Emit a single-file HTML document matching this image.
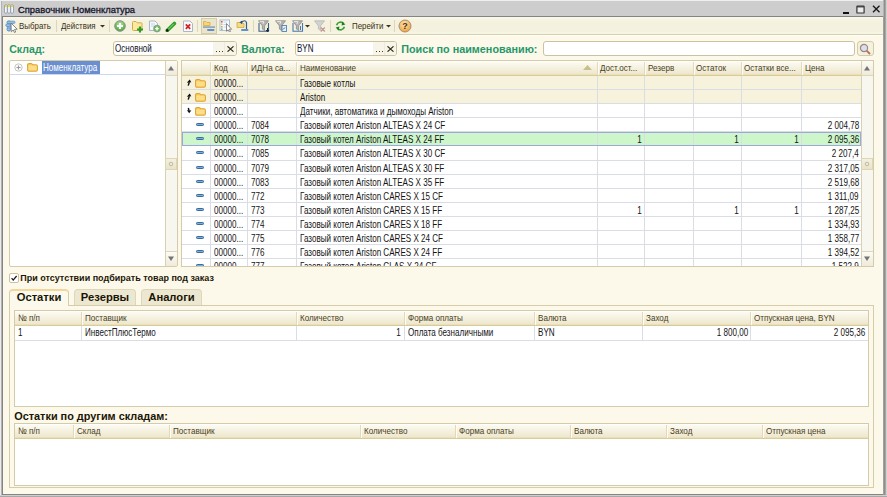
<!DOCTYPE html>
<html><head><meta charset="utf-8"><style>
html,body{margin:0;padding:0;width:887px;height:497px;overflow:hidden;background:#cdcdcd;position:relative;font-family:"Liberation Sans", sans-serif}
div{position:absolute}
.t{position:absolute;white-space:nowrap;line-height:1;font-family:"Liberation Sans", sans-serif}
</style></head><body>
<div style="left:0px;top:0px;width:887px;height:1px;background:#efefef"></div><div style="left:0px;top:1px;width:887px;height:15px;background:#cdcdcd"></div><div style="left:0px;top:0px;width:1px;height:497px;background:#ececec"></div><div style="left:1px;top:1px;width:1px;height:496px;background:#b2b2b2"></div><div style="left:2px;top:16px;width:882px;height:479px;background:#848484"></div><div style="left:3px;top:17px;width:880px;height:477px;background:#fcf9ea"></div><div style="left:883px;top:0px;width:1px;height:497px;background:#b4b4b4"></div><div style="left:884px;top:0px;width:1px;height:497px;background:#8e8e8e"></div><div style="left:885px;top:0px;width:1px;height:497px;background:#a6a6a6"></div><div style="left:886px;top:0px;width:1px;height:497px;background:#d2d2cc"></div><div style="left:883px;top:16px;width:1px;height:479px;background:#a0a0a0"></div><div style="left:0px;top:495px;width:887px;height:1px;background:#cfcfcf"></div><div style="left:0px;top:496px;width:887px;height:1px;background:#a8a8a8"></div><svg style="position:absolute;left:4px;top:4px" width="10" height="10" viewBox="0 0 10 10"><g fill="#fff" stroke="#8797ab" stroke-width="0.9"><rect x="0.6" y="0.8" width="2.6" height="8.4" rx="1"/><rect x="3.7" y="0.8" width="2.6" height="8.4" rx="1"/><rect x="6.8" y="0.8" width="2.6" height="8.4" rx="1"/></g><g fill="#f3d21e"><rect x="1" y="1.2" width="1.8" height="1.8"/><rect x="4.1" y="1.2" width="1.8" height="1.8"/><rect x="7.2" y="1.2" width="1.8" height="1.8"/></g></svg><span class="t" style="left:18px;top:4.74px;font-size:9.4px;font-weight:400;color:#15152a;-webkit-text-stroke:0.3px #15152a">Справочник Номенклатура</span><div style="left:843px;top:12px;width:6px;height:2px;background:#111"></div><svg style="position:absolute;left:856px;top:5px" width="9" height="9" viewBox="0 0 9 9"><rect x="0.9" y="1" width="7.2" height="7" rx="0.6" fill="#ececec" stroke="#333" stroke-width="1.2"/><line x1="1" y1="1.8" x2="8" y2="1.8" stroke="#333" stroke-width="1.2"/></svg><svg style="position:absolute;left:872px;top:5px" width="9" height="8" viewBox="0 0 9 8"><path d="M1 0.8 L7.5 7.3 M7.5 0.8 L1 7.3" stroke="#1a1a1a" stroke-width="1.35"/></svg><div style="left:3px;top:17px;width:880px;height:17px;background:linear-gradient(#fbf9ea 0px,#f6f3e2 3px,#f4f1de 5px,#f4f1de 14px,#f8f6e6 17px)"></div><div style="left:3px;top:34px;width:880px;height:1px;background:#d6cfae"></div><div style="left:3px;top:35px;width:880px;height:1px;background:#fffff6"></div><span class="t" style="left:19.2px;top:21.52px;font-size:8.6px;font-weight:400;color:#3a3016;transform:scaleX(0.92);transform-origin:0 0;">Выбрать</span><div style="left:56px;top:20px;width:1px;height:12px;background:#dcd6ba"></div><span class="t" style="left:61.4px;top:21.52px;font-size:8.6px;font-weight:400;color:#3a3016;transform:scaleX(0.92);transform-origin:0 0;">Действия</span><svg style="position:absolute;left:100px;top:25px" width="5" height="3" viewBox="0 0 5 3"><path d="M0 0 L5 0 L2.5 2.6 Z" fill="#3a3220"/></svg><div style="left:109px;top:20px;width:1px;height:12px;background:#dcd6ba"></div><span class="t" style="left:351.7px;top:21.52px;font-size:8.6px;font-weight:400;color:#3a3016;transform:scaleX(0.92);transform-origin:0 0;">Перейти</span><svg style="position:absolute;left:386px;top:25px" width="5" height="3" viewBox="0 0 5 3"><path d="M0 0 L5 0 L2.5 2.6 Z" fill="#3a3220"/></svg><div style="left:197px;top:20px;width:1px;height:12px;background:#dcd6ba"></div><div style="left:253px;top:20px;width:1px;height:12px;background:#dcd6ba"></div><div style="left:330px;top:20px;width:1px;height:12px;background:#dcd6ba"></div><div style="left:394px;top:20px;width:1px;height:12px;background:#dcd6ba"></div><svg style="position:absolute;left:5px;top:20px" width="13" height="13" viewBox="0 0 13 13"><g fill="#9cc4ec" stroke="#5d8fc6" stroke-width="0.8"><rect x="2.4" y="1" width="3" height="10" rx="1.2"/><rect x="2" y="1.2" width="8" height="2.2" rx="1.1"/><rect x="0.8" y="4" width="4.6" height="2.4" rx="1.2"/><rect x="2" y="8" width="3.4" height="2.6" rx="1.2"/></g><path d="M6 3 L6.3 11.8 L8.2 10 L9.5 12.6 L10.7 12 L9.5 9.4 L12.2 9.2 Z" fill="#fff" stroke="#7a7a7a" stroke-width="0.9" stroke-linejoin="round"/></svg><svg style="position:absolute;left:114px;top:20px" width="12" height="12" viewBox="0 0 12 12"><defs><radialGradient id="gc" cx="0.5" cy="0.35" r="0.6"><stop offset="0" stop-color="#b8e8a8"/><stop offset="1" stop-color="#4fa83e"/></radialGradient></defs><circle cx="6" cy="6" r="5.3" fill="url(#gc)" stroke="#8a948a" stroke-width="1"/><path d="M6 3 V9 M3 6 H9" stroke="#fff" stroke-width="2"/></svg><svg style="position:absolute;left:131px;top:20px" width="13" height="13" viewBox="0 0 13 13"><path d="M1.5 2.5 Q1.5 1.5 2.5 1.5 H5 L6.2 2.8 H10 Q11 2.8 11 3.8 V9.5 Q11 10.5 10 10.5 H2.5 Q1.5 10.5 1.5 9.5 Z" fill="#f9eaa0" stroke="#d6a94a" stroke-width="1"/><path d="M9 6.5 V12.5 M6 9.5 H12" stroke="#2e9a2a" stroke-width="2.2"/></svg><svg style="position:absolute;left:148px;top:20px" width="13" height="13" viewBox="0 0 13 13"><path d="M1.5 1 H7 L9.5 3.5 V10.5 H1.5 Z" fill="#f4f7fb" stroke="#a8b8cc" stroke-width="1"/><path d="M3 4 H7 M3 6 H6" stroke="#c9d4e2" stroke-width="1"/><circle cx="9" cy="8.6" r="3.4" fill="#6bbb5a" stroke="#8a948a" stroke-width="0.8"/><path d="M9 6.8 V10.4 M7.2 8.6 H10.8" stroke="#fff" stroke-width="1.4"/></svg><svg style="position:absolute;left:165px;top:21px" width="12" height="11" viewBox="0 0 12 11"><path d="M2.2 9.6 L9.4 2.4" stroke="#2f9f2a" stroke-width="3.6" stroke-linecap="round"/><path d="M2.6 9 L8.8 2.8" stroke="#8fe07a" stroke-width="1"/><circle cx="2.3" cy="9.4" r="1.3" fill="#1b1b1b"/></svg><svg style="position:absolute;left:182px;top:20px" width="12" height="13" viewBox="0 0 12 13"><path d="M1.5 1 H8 L10.5 3.5 V11.5 H1.5 Z" fill="#f7f9fc" stroke="#a8b8cc" stroke-width="1"/><path d="M3.8 4.4 L8.2 8.8 M8.2 4.4 L3.8 8.8" stroke="#d42020" stroke-width="1.7"/></svg><div style="left:201px;top:18px;width:14px;height:14px;background:#ebe5cb;border:1px solid #d5cca8"></div><svg style="position:absolute;left:202px;top:20px" width="14" height="12" viewBox="0 0 14 12"><path d="M1.5 1.5 H4 L5 2.5 H8 V5.5 H1.5 Z" fill="#f4d878" stroke="#d8aa48" stroke-width="0.8"/><rect x="1" y="6.3" width="12" height="1.6" fill="#8fa3b8"/><rect x="5" y="9" width="7.5" height="2" rx="1" fill="#5f90c8"/></svg><svg style="position:absolute;left:219px;top:19px" width="14" height="13" viewBox="0 0 14 13"><rect x="1" y="1" width="9.5" height="10.5" fill="#f7fafd" stroke="#a9c0d8" stroke-width="1"/><rect x="2" y="2" width="1.6" height="1.6" fill="#e05050"/><rect x="2" y="4.5" width="1.6" height="1.6" fill="#e8c050"/><rect x="2" y="7" width="1.6" height="1.6" fill="#d8a070"/><rect x="2" y="9.5" width="1.6" height="1.2" fill="#50a050"/><path d="M4.5 3 H8 M4.5 5.5 H8 M4.5 8 H7" stroke="#c8d6e6" stroke-width="1"/><path d="M7.5 4.5 L7.5 12.3 L9.2 10.8 L10.4 13 L11.5 12.4 L10.4 10.2 L12.6 10.2 Z" fill="#fff" stroke="#7d7d7d" stroke-width="0.9"/></svg><svg style="position:absolute;left:236px;top:19px" width="13" height="13" viewBox="0 0 13 13"><path d="M1 3.5 H4 L5 4.5 H8 V8.5 H1 Z" fill="#f5da80" stroke="#d2a848" stroke-width="0.8"/><path d="M5.5 3.5 Q9 0 10.5 3.5 V10" fill="none" stroke="#3c5a78" stroke-width="1.2"/><path d="M3.5 3.2 L6.3 1.5 L6 5 Z" fill="#1e4e8a"/><rect x="5" y="10" width="7.5" height="2" rx="1" fill="#5f90c8"/></svg><svg style="position:absolute;left:258px;top:20px" width="12" height="12" viewBox="0 0 12 12"><path d="M0.5 0.8 H10.5 L6.6 5.8 V10.5 L4.4 9 V5.8 Z" fill="#b4b4b4" stroke="#8a8a8a" stroke-width="0.8"/><path d="M1.8 1.6 H6 L4.8 4" stroke="#e8e8e8" stroke-width="1" fill="none"/><path d="M1 3 V11.2 H10.5 V3" fill="none" stroke="#40608a" stroke-width="1.1"/><path d="M9.5 8 V11.5 M8 10 L9.5 11.8 L11 10" stroke="#1a2a4a" stroke-width="1"/></svg><svg style="position:absolute;left:275px;top:20px" width="12" height="12" viewBox="0 0 12 12"><path d="M0.5 0.8 H10.5 L6.6 5.8 V10.5 L4.4 9 V5.8 Z" fill="#b4b4b4" stroke="#8a8a8a" stroke-width="0.8"/><path d="M1.8 1.6 H6 L4.8 4" stroke="#e8e8e8" stroke-width="1" fill="none"/><rect x="7" y="5.5" width="4.5" height="6" fill="#e8f0fa" stroke="#5080b8" stroke-width="0.9"/><path d="M8 9.5 L10 7.5" stroke="#2a5a9a" stroke-width="0.9"/></svg><svg style="position:absolute;left:292px;top:20px" width="12" height="12" viewBox="0 0 12 12"><path d="M0.5 0.8 H10.5 L6.6 5.8 V10.5 L4.4 9 V5.8 Z" fill="#b4b4b4" stroke="#8a8a8a" stroke-width="0.8"/><path d="M1.8 1.6 H6 L4.8 4" stroke="#e8e8e8" stroke-width="1" fill="none"/><path d="M1 3 V11.2 H10.5 V3" fill="none" stroke="#4a78b0" stroke-width="1.1"/><path d="M8.5 6 V10" stroke="#4a78b0" stroke-width="1"/></svg><svg style="position:absolute;left:305px;top:25px" width="5" height="3" viewBox="0 0 5 3"><path d="M0 0 L5 0 L2.5 2.6 Z" fill="#3a3220"/></svg><svg style="position:absolute;left:314px;top:20px" width="12" height="12" viewBox="0 0 12 12"><path d="M0.5 0.8 H10.5 L6.6 5.8 V10.5 L4.4 9 V5.8 Z" fill="#d2d2d2" stroke="#b8b8b8" stroke-width="0.8"/><path d="M6.8 7.5 L10.8 11.5 M10.8 7.5 L6.8 11.5" stroke="#c09090" stroke-width="1.1"/></svg><svg style="position:absolute;left:335px;top:21px" width="11" height="10" viewBox="0 0 11 10"><path d="M1.6 4.2 A4 4 0 0 1 8.6 2.6" fill="none" stroke="#3aa03a" stroke-width="1.6"/><path d="M9.4 5.8 A4 4 0 0 1 2.4 7.4" fill="none" stroke="#3aa03a" stroke-width="1.6"/><path d="M7.2 0.6 L10.4 3.6 L6.6 4.4 Z" fill="#1e7e1e"/><path d="M3.8 9.4 L0.6 6.4 L4.4 5.6 Z" fill="#1e7e1e"/></svg><svg style="position:absolute;left:398px;top:19px" width="14" height="14" viewBox="0 0 14 14"><defs><radialGradient id="hc" cx="0.45" cy="0.35" r="0.65"><stop offset="0" stop-color="#fde6b4"/><stop offset="1" stop-color="#eea23c"/></radialGradient></defs><circle cx="7" cy="7" r="6" fill="url(#hc)" stroke="#a89070" stroke-width="1"/><text x="7" y="10.3" font-family="Liberation Sans" font-weight="700" font-size="9" text-anchor="middle" fill="#4a3010">?</text></svg><span class="t" style="left:9.2px;top:44.03px;font-size:10.6px;font-weight:700;color:#27976a;">Склад:</span><span class="t" style="left:241.2px;top:44.03px;font-size:10.6px;font-weight:700;color:#27976a;">Валюта:</span><span class="t" style="left:401.2px;top:43.86px;font-size:10.8px;font-weight:700;color:#27976a;">Поиск по наименованию:</span><div style="left:113px;top:41px;width:122px;height:13px;border:1px solid #cac3a2;border-radius:3px;background:#fff;overflow:hidden"><div style="left:99px;top:0;width:23px;height:13px;background:#f7f5ea"></div><div style="left:110px;top:0;width:1px;height:13px;background:#efebdc"></div><div style="left:101.5px;top:9.2px;width:1.3px;height:1.3px;background:#4a3c1c"></div><div style="left:104.5px;top:9.2px;width:1.3px;height:1.3px;background:#4a3c1c"></div><div style="left:107.5px;top:9.2px;width:1.3px;height:1.3px;background:#4a3c1c"></div><svg style="position:absolute;left:113px;top:4px" width="7" height="6" viewBox="0 0 7 6"><path d="M0.5 0.3 L6.5 5.7 M6.5 0.3 L0.5 5.7" stroke="#3a2e12" stroke-width="1.15"/></svg><span class="t" style="left:1px;top:1.67px;font-size:10.2px;color:#14142a;transform:scaleX(0.787);transform-origin:0 0">Основной</span></div><div style="left:295px;top:41px;width:100px;height:13px;border:1px solid #cac3a2;border-radius:3px;background:#fff;overflow:hidden"><div style="left:77px;top:0;width:23px;height:13px;background:#f7f5ea"></div><div style="left:88px;top:0;width:1px;height:13px;background:#efebdc"></div><div style="left:79.5px;top:9.2px;width:1.3px;height:1.3px;background:#4a3c1c"></div><div style="left:82.5px;top:9.2px;width:1.3px;height:1.3px;background:#4a3c1c"></div><div style="left:85.5px;top:9.2px;width:1.3px;height:1.3px;background:#4a3c1c"></div><svg style="position:absolute;left:91px;top:4px" width="7" height="6" viewBox="0 0 7 6"><path d="M0.5 0.3 L6.5 5.7 M6.5 0.3 L0.5 5.7" stroke="#3a2e12" stroke-width="1.15"/></svg><span class="t" style="left:1px;top:1.67px;font-size:10.2px;color:#14142a;transform:scaleX(0.787);transform-origin:0 0">BYN</span></div><div style="left:543px;top:41px;width:310px;height:13px;border:1px solid #cac3a2;border-radius:3px;background:#fff;overflow:hidden"></div><div style="left:857px;top:41px;width:15px;height:13px;border:1px solid #d2cba8;border-radius:3px;background:#f4f1e0"></div><svg style="position:absolute;left:859px;top:43px" width="13" height="12" viewBox="0 0 13 12"><circle cx="5" cy="5" r="3.6" fill="#cfe3f7" stroke="#b08070" stroke-width="1.2"/><path d="M7.6 7.6 L11 11" stroke="#b07a66" stroke-width="2"/></svg><div style="left:9px;top:60px;width:169px;height:207px;background:#fff;border:1px solid #d3cba9;box-sizing:border-box;border-radius:2px"></div><div style="left:10px;top:74px;width:155px;height:1px;background:#c9daf0"></div><svg style="position:absolute;left:14px;top:63px" width="9" height="9" viewBox="0 0 9 9"><circle cx="4.5" cy="4.5" r="3.7" fill="#fafafa" stroke="#c4c4c4"/><path d="M2.5 4.5 H6.5 M4.5 2.5 V6.5" stroke="#999" stroke-width="1"/></svg><svg style="position:absolute;left:27px;top:63px" width="11" height="9" viewBox="0 0 11 9"><path d="M0.6 2 Q0.6 0.6 2 0.6 H4.2 Q5.2 0.6 5.6 1.8 H9 Q10.4 1.8 10.4 3.2 V6.8 Q10.4 8.2 9 8.2 H2 Q0.6 8.2 0.6 6.8 Z" fill="#fbd66e" stroke="#e0a438" stroke-width="1.1"/><path d="M1.4 3.9 H9.6 M1.4 5.9 H9.6" stroke="#fde9a8" stroke-width="0.9"/></svg><div style="left:42px;top:61px;width:58px;height:13px;background:#6a8fd0"></div><span class="t" style="left:43px;top:62.65px;font-size:10.1px;font-weight:400;color:#ffffff;transform:scaleX(0.8);transform-origin:0 0;">Номенклатура</span><div style="left:165px;top:61px;width:12px;height:205px;background:#f7f6ef;border-left:1px solid #d8d0b0;box-sizing:border-box"></div><div style="left:165px;top:61px;width:12px;height:15px;background:linear-gradient(#fcfbf4,#efeadb);border-left:1px solid #d8d0b0;border-bottom:1px solid #ddd6bb;box-sizing:border-box"></div><div style="left:165px;top:251px;width:12px;height:15px;background:linear-gradient(#fcfbf4,#efeadb);border-left:1px solid #d8d0b0;border-top:1px solid #ddd6bb;box-sizing:border-box"></div><svg style="position:absolute;left:168px;top:66px" width="6" height="5" viewBox="0 0 6 5"><path d="M0 4.6 L3 0 L6 4.6 Z" fill="#747474"/></svg><svg style="position:absolute;left:168px;top:256px" width="6" height="5" viewBox="0 0 6 5"><path d="M0 0.4 L3 5 L6 0.4 Z" fill="#747474"/></svg><div style="left:165px;top:158px;width:12px;height:12px;background:linear-gradient(#f4f0de,#e9e3c8);border:1px solid #ddd5b5;box-sizing:border-box"></div><svg style="position:absolute;left:168px;top:161px" width="6" height="6" viewBox="0 0 6 6"><circle cx="3" cy="3" r="1.8" fill="none" stroke="#b9b4a0" stroke-width="0.9"/></svg><div style="left:181px;top:60px;width:693px;height:207px;background:#fff;border:1px solid #d3cba9;box-sizing:border-box"></div><div style="left:182px;top:61px;width:679px;height:14px;background:linear-gradient(#fdfcf5,#ede6ca)"></div><div style="left:182px;top:61px;width:679px;height:1px;background:#fffef9"></div><div style="left:182px;top:74px;width:679px;height:1px;background:#e9dfb8"></div><div style="left:182px;top:75px;width:679px;height:1px;background:#d9cc9a"></div><div style="left:210px;top:62px;width:1px;height:13px;background:#e2d9b6"></div><div style="left:211px;top:62px;width:1px;height:13px;background:#fffdf5"></div><div style="left:247px;top:62px;width:1px;height:13px;background:#e2d9b6"></div><div style="left:248px;top:62px;width:1px;height:13px;background:#fffdf5"></div><div style="left:296px;top:62px;width:1px;height:13px;background:#e2d9b6"></div><div style="left:297px;top:62px;width:1px;height:13px;background:#fffdf5"></div><div style="left:597px;top:62px;width:1px;height:13px;background:#e2d9b6"></div><div style="left:598px;top:62px;width:1px;height:13px;background:#fffdf5"></div><div style="left:644px;top:62px;width:1px;height:13px;background:#e2d9b6"></div><div style="left:645px;top:62px;width:1px;height:13px;background:#fffdf5"></div><div style="left:693px;top:62px;width:1px;height:13px;background:#e2d9b6"></div><div style="left:694px;top:62px;width:1px;height:13px;background:#fffdf5"></div><div style="left:741px;top:62px;width:1px;height:13px;background:#e2d9b6"></div><div style="left:742px;top:62px;width:1px;height:13px;background:#fffdf5"></div><div style="left:801px;top:62px;width:1px;height:13px;background:#e2d9b6"></div><div style="left:802px;top:62px;width:1px;height:13px;background:#fffdf5"></div><span class="t" style="left:213.7px;top:64.03px;font-size:9.3px;font-weight:400;color:#4a3e1c;transform:scaleX(0.87);transform-origin:0 0;">Код</span><span class="t" style="left:250.5px;top:64.03px;font-size:9.3px;font-weight:400;color:#4a3e1c;transform:scaleX(0.87);transform-origin:0 0;">ИДНа са...</span><span class="t" style="left:299.5px;top:64.03px;font-size:9.3px;font-weight:400;color:#4a3e1c;transform:scaleX(0.87);transform-origin:0 0;">Наименование</span><svg style="position:absolute;left:583px;top:65px" width="9" height="5" viewBox="0 0 9 5"><path d="M0 5 L4.5 0 L9 5 Z" fill="#c9bf8c"/></svg><span class="t" style="left:600px;top:64.03px;font-size:9.3px;font-weight:400;color:#4a3e1c;transform:scaleX(0.87);transform-origin:0 0;">Дост.ост...</span><span class="t" style="left:648.4px;top:64.03px;font-size:9.3px;font-weight:400;color:#4a3e1c;transform:scaleX(0.87);transform-origin:0 0;">Резерв</span><span class="t" style="left:696.3px;top:64.03px;font-size:9.3px;font-weight:400;color:#4a3e1c;transform:scaleX(0.87);transform-origin:0 0;">Остаток</span><span class="t" style="left:744.2px;top:64.03px;font-size:9.3px;font-weight:400;color:#4a3e1c;transform:scaleX(0.87);transform-origin:0 0;">Остатки все...</span><span class="t" style="left:804.6px;top:64.03px;font-size:9.3px;font-weight:400;color:#4a3e1c;transform:scaleX(0.87);transform-origin:0 0;">Цена</span><div style="left:182px;top:76px;width:679px;height:190px;overflow:hidden"><div style="left:0;top:0px;width:679px;height:14px;background:#f6f2dc"></div><div style="left:0;top:13px;width:679px;height:1px;background:#dadee4"></div><div style="left:28px;top:0px;width:1px;height:14px;background:#dadee4"></div><div style="left:65px;top:0px;width:1px;height:14px;background:#dadee4"></div><div style="left:114px;top:0px;width:1px;height:14px;background:#dadee4"></div><div style="left:415px;top:0px;width:1px;height:14px;background:#dadee4"></div><div style="left:462px;top:0px;width:1px;height:14px;background:#dadee4"></div><div style="left:511px;top:0px;width:1px;height:14px;background:#dadee4"></div><div style="left:559px;top:0px;width:1px;height:14px;background:#dadee4"></div><div style="left:619px;top:0px;width:1px;height:14px;background:#dadee4"></div><svg style="position:absolute;left:4px;top:3px" width="6" height="8" viewBox="0 0 6 8"><path d="M0.8 3.7 L5.3 3.2 L3.7 0.6 Z" fill="#111"/><path d="M3.3 3.2 L2.2 6.6" stroke="#111" stroke-width="1.4"/></svg><svg style="position:absolute;left:13px;top:3px" width="11" height="9" viewBox="0 0 11 9"><path d="M0.6 2 Q0.6 0.6 2 0.6 H4.2 Q5.2 0.6 5.6 1.8 H9 Q10.4 1.8 10.4 3.2 V6.8 Q10.4 8.2 9 8.2 H2 Q0.6 8.2 0.6 6.8 Z" fill="#fbd66e" stroke="#e0a438" stroke-width="1.1"/><path d="M1.4 3.9 H9.6 M1.4 5.9 H9.6" stroke="#fde9a8" stroke-width="0.9"/></svg><span class="t" style="left:31.599999999999994px;top:2.85px;font-size:10.1px;color:#141414;transform:scaleX(0.8);transform-origin:0 0">00000...</span><span class="t" style="left:118.10000000000002px;top:2.85px;font-size:10.1px;color:#141414;transform:scaleX(0.8);transform-origin:0 0">Газовые котлы</span><div style="left:0;top:14px;width:679px;height:14px;background:#f6f2dc"></div><div style="left:0;top:27px;width:679px;height:1px;background:#dadee4"></div><div style="left:28px;top:14px;width:1px;height:14px;background:#dadee4"></div><div style="left:65px;top:14px;width:1px;height:14px;background:#dadee4"></div><div style="left:114px;top:14px;width:1px;height:14px;background:#dadee4"></div><div style="left:415px;top:14px;width:1px;height:14px;background:#dadee4"></div><div style="left:462px;top:14px;width:1px;height:14px;background:#dadee4"></div><div style="left:511px;top:14px;width:1px;height:14px;background:#dadee4"></div><div style="left:559px;top:14px;width:1px;height:14px;background:#dadee4"></div><div style="left:619px;top:14px;width:1px;height:14px;background:#dadee4"></div><svg style="position:absolute;left:4px;top:17px" width="6" height="8" viewBox="0 0 6 8"><path d="M0.8 3.7 L5.3 3.2 L3.7 0.6 Z" fill="#111"/><path d="M3.3 3.2 L2.2 6.6" stroke="#111" stroke-width="1.4"/></svg><svg style="position:absolute;left:13px;top:17px" width="11" height="9" viewBox="0 0 11 9"><path d="M0.6 2 Q0.6 0.6 2 0.6 H4.2 Q5.2 0.6 5.6 1.8 H9 Q10.4 1.8 10.4 3.2 V6.8 Q10.4 8.2 9 8.2 H2 Q0.6 8.2 0.6 6.8 Z" fill="#fbd66e" stroke="#e0a438" stroke-width="1.1"/><path d="M1.4 3.9 H9.6 M1.4 5.9 H9.6" stroke="#fde9a8" stroke-width="0.9"/></svg><span class="t" style="left:31.599999999999994px;top:16.85px;font-size:10.1px;color:#141414;transform:scaleX(0.8);transform-origin:0 0">00000...</span><span class="t" style="left:118.10000000000002px;top:16.85px;font-size:10.1px;color:#141414;transform:scaleX(0.8);transform-origin:0 0">Ariston</span><div style="left:0;top:28px;width:679px;height:14px;background:#fff"></div><div style="left:0;top:41px;width:679px;height:1px;background:#dadee4"></div><div style="left:28px;top:28px;width:1px;height:14px;background:#dadee4"></div><div style="left:65px;top:28px;width:1px;height:14px;background:#dadee4"></div><div style="left:114px;top:28px;width:1px;height:14px;background:#dadee4"></div><div style="left:415px;top:28px;width:1px;height:14px;background:#dadee4"></div><div style="left:462px;top:28px;width:1px;height:14px;background:#dadee4"></div><div style="left:511px;top:28px;width:1px;height:14px;background:#dadee4"></div><div style="left:559px;top:28px;width:1px;height:14px;background:#dadee4"></div><div style="left:619px;top:28px;width:1px;height:14px;background:#dadee4"></div><svg style="position:absolute;left:4px;top:31px" width="6" height="8" viewBox="0 0 6 8"><path d="M0.9 3.3 L5.3 3.5 L3.2 6.2 Z" fill="#111"/><path d="M2.3 1 L3.1 3.8" stroke="#111" stroke-width="1.4"/></svg><svg style="position:absolute;left:13px;top:31px" width="11" height="9" viewBox="0 0 11 9"><path d="M0.6 2 Q0.6 0.6 2 0.6 H4.2 Q5.2 0.6 5.6 1.8 H9 Q10.4 1.8 10.4 3.2 V6.8 Q10.4 8.2 9 8.2 H2 Q0.6 8.2 0.6 6.8 Z" fill="#fbd66e" stroke="#e0a438" stroke-width="1.1"/><path d="M1.4 3.9 H9.6 M1.4 5.9 H9.6" stroke="#fde9a8" stroke-width="0.9"/></svg><span class="t" style="left:31.599999999999994px;top:30.85px;font-size:10.1px;color:#141414;transform:scaleX(0.8);transform-origin:0 0">00000...</span><span class="t" style="left:118.10000000000002px;top:30.85px;font-size:10.1px;color:#141414;transform:scaleX(0.8);transform-origin:0 0">Датчики, автоматика и дымоходы Ariston</span><div style="left:0;top:42px;width:679px;height:14px;background:#fff"></div><div style="left:0;top:55px;width:679px;height:1px;background:#dadee4"></div><div style="left:28px;top:42px;width:1px;height:14px;background:#dadee4"></div><div style="left:65px;top:42px;width:1px;height:14px;background:#dadee4"></div><div style="left:114px;top:42px;width:1px;height:14px;background:#dadee4"></div><div style="left:415px;top:42px;width:1px;height:14px;background:#dadee4"></div><div style="left:462px;top:42px;width:1px;height:14px;background:#dadee4"></div><div style="left:511px;top:42px;width:1px;height:14px;background:#dadee4"></div><div style="left:559px;top:42px;width:1px;height:14px;background:#dadee4"></div><div style="left:619px;top:42px;width:1px;height:14px;background:#dadee4"></div><div style="left:14px;top:47px;width:8px;height:3px;background:#7ab0e0;border:0.8px solid #3f6b9c;box-sizing:border-box;border-radius:1.2px"></div><span class="t" style="left:31.599999999999994px;top:44.85px;font-size:10.1px;color:#141414;transform:scaleX(0.8);transform-origin:0 0">00000...</span><span class="t" style="left:69px;top:44.85px;font-size:10.1px;color:#141414;transform:scaleX(0.8);transform-origin:0 0">7084</span><span class="t" style="left:118.10000000000002px;top:44.85px;font-size:10.1px;color:#141414;transform:scaleX(0.8);transform-origin:0 0">Газовый котел Ariston ALTEAS X 24 CF</span><span class="t" style="right:2px;top:44.85px;font-size:10.1px;color:#141414;transform:scaleX(0.8);transform-origin:100% 0">2 004,78</span><div style="left:0;top:56px;width:679px;height:14px;background:#cdf6ca"></div><div style="left:0;top:69px;width:679px;height:1px;background:#dadee4"></div><div style="left:28px;top:56px;width:1px;height:14px;background:#dadee4"></div><div style="left:65px;top:56px;width:1px;height:14px;background:#dadee4"></div><div style="left:114px;top:56px;width:1px;height:14px;background:#dadee4"></div><div style="left:415px;top:56px;width:1px;height:14px;background:#dadee4"></div><div style="left:462px;top:56px;width:1px;height:14px;background:#dadee4"></div><div style="left:511px;top:56px;width:1px;height:14px;background:#dadee4"></div><div style="left:559px;top:56px;width:1px;height:14px;background:#dadee4"></div><div style="left:619px;top:56px;width:1px;height:14px;background:#dadee4"></div><div style="left:0;top:56px;width:677px;height:12px;border:1px solid #9ea6de"></div><div style="left:14px;top:61px;width:8px;height:3px;background:#7ab0e0;border:0.8px solid #3f6b9c;box-sizing:border-box;border-radius:1.2px"></div><span class="t" style="left:31.599999999999994px;top:58.85px;font-size:10.1px;color:#141414;transform:scaleX(0.8);transform-origin:0 0">00000...</span><span class="t" style="left:69px;top:58.85px;font-size:10.1px;color:#141414;transform:scaleX(0.8);transform-origin:0 0">7078</span><span class="t" style="left:118.10000000000002px;top:58.85px;font-size:10.1px;color:#141414;transform:scaleX(0.8);transform-origin:0 0">Газовый котел Ariston ALTEAS X 24 FF</span><span class="t" style="right:219px;top:58.85px;font-size:10.1px;color:#141414;transform:scaleX(0.8);transform-origin:100% 0">1</span><span class="t" style="right:122px;top:58.85px;font-size:10.1px;color:#141414;transform:scaleX(0.8);transform-origin:100% 0">1</span><span class="t" style="right:62px;top:58.85px;font-size:10.1px;color:#141414;transform:scaleX(0.8);transform-origin:100% 0">1</span><span class="t" style="right:2px;top:58.85px;font-size:10.1px;color:#141414;transform:scaleX(0.8);transform-origin:100% 0">2 095,36</span><div style="left:0;top:70px;width:679px;height:15px;background:#fff"></div><div style="left:0;top:84px;width:679px;height:1px;background:#dadee4"></div><div style="left:28px;top:70px;width:1px;height:15px;background:#dadee4"></div><div style="left:65px;top:70px;width:1px;height:15px;background:#dadee4"></div><div style="left:114px;top:70px;width:1px;height:15px;background:#dadee4"></div><div style="left:415px;top:70px;width:1px;height:15px;background:#dadee4"></div><div style="left:462px;top:70px;width:1px;height:15px;background:#dadee4"></div><div style="left:511px;top:70px;width:1px;height:15px;background:#dadee4"></div><div style="left:559px;top:70px;width:1px;height:15px;background:#dadee4"></div><div style="left:619px;top:70px;width:1px;height:15px;background:#dadee4"></div><div style="left:14px;top:75px;width:8px;height:3px;background:#7ab0e0;border:0.8px solid #3f6b9c;box-sizing:border-box;border-radius:1.2px"></div><span class="t" style="left:31.599999999999994px;top:73.35px;font-size:10.1px;color:#141414;transform:scaleX(0.8);transform-origin:0 0">00000...</span><span class="t" style="left:69px;top:73.35px;font-size:10.1px;color:#141414;transform:scaleX(0.8);transform-origin:0 0">7085</span><span class="t" style="left:118.10000000000002px;top:73.35px;font-size:10.1px;color:#141414;transform:scaleX(0.8);transform-origin:0 0">Газовый котел Ariston ALTEAS X 30 CF</span><span class="t" style="right:2px;top:73.35px;font-size:10.1px;color:#141414;transform:scaleX(0.8);transform-origin:100% 0">2 207,4</span><div style="left:0;top:85px;width:679px;height:14px;background:#fff"></div><div style="left:0;top:98px;width:679px;height:1px;background:#dadee4"></div><div style="left:28px;top:85px;width:1px;height:14px;background:#dadee4"></div><div style="left:65px;top:85px;width:1px;height:14px;background:#dadee4"></div><div style="left:114px;top:85px;width:1px;height:14px;background:#dadee4"></div><div style="left:415px;top:85px;width:1px;height:14px;background:#dadee4"></div><div style="left:462px;top:85px;width:1px;height:14px;background:#dadee4"></div><div style="left:511px;top:85px;width:1px;height:14px;background:#dadee4"></div><div style="left:559px;top:85px;width:1px;height:14px;background:#dadee4"></div><div style="left:619px;top:85px;width:1px;height:14px;background:#dadee4"></div><div style="left:14px;top:90px;width:8px;height:3px;background:#7ab0e0;border:0.8px solid #3f6b9c;box-sizing:border-box;border-radius:1.2px"></div><span class="t" style="left:31.599999999999994px;top:87.85px;font-size:10.1px;color:#141414;transform:scaleX(0.8);transform-origin:0 0">00000...</span><span class="t" style="left:69px;top:87.85px;font-size:10.1px;color:#141414;transform:scaleX(0.8);transform-origin:0 0">7079</span><span class="t" style="left:118.10000000000002px;top:87.85px;font-size:10.1px;color:#141414;transform:scaleX(0.8);transform-origin:0 0">Газовый котел Ariston ALTEAS X 30 FF</span><span class="t" style="right:2px;top:87.85px;font-size:10.1px;color:#141414;transform:scaleX(0.8);transform-origin:100% 0">2 317,05</span><div style="left:0;top:99px;width:679px;height:14px;background:#fff"></div><div style="left:0;top:112px;width:679px;height:1px;background:#dadee4"></div><div style="left:28px;top:99px;width:1px;height:14px;background:#dadee4"></div><div style="left:65px;top:99px;width:1px;height:14px;background:#dadee4"></div><div style="left:114px;top:99px;width:1px;height:14px;background:#dadee4"></div><div style="left:415px;top:99px;width:1px;height:14px;background:#dadee4"></div><div style="left:462px;top:99px;width:1px;height:14px;background:#dadee4"></div><div style="left:511px;top:99px;width:1px;height:14px;background:#dadee4"></div><div style="left:559px;top:99px;width:1px;height:14px;background:#dadee4"></div><div style="left:619px;top:99px;width:1px;height:14px;background:#dadee4"></div><div style="left:14px;top:104px;width:8px;height:3px;background:#7ab0e0;border:0.8px solid #3f6b9c;box-sizing:border-box;border-radius:1.2px"></div><span class="t" style="left:31.599999999999994px;top:101.85px;font-size:10.1px;color:#141414;transform:scaleX(0.8);transform-origin:0 0">00000...</span><span class="t" style="left:69px;top:101.85px;font-size:10.1px;color:#141414;transform:scaleX(0.8);transform-origin:0 0">7083</span><span class="t" style="left:118.10000000000002px;top:101.85px;font-size:10.1px;color:#141414;transform:scaleX(0.8);transform-origin:0 0">Газовый котел Ariston ALTEAS X 35 FF</span><span class="t" style="right:2px;top:101.85px;font-size:10.1px;color:#141414;transform:scaleX(0.8);transform-origin:100% 0">2 519,68</span><div style="left:0;top:113px;width:679px;height:14px;background:#fff"></div><div style="left:0;top:126px;width:679px;height:1px;background:#dadee4"></div><div style="left:28px;top:113px;width:1px;height:14px;background:#dadee4"></div><div style="left:65px;top:113px;width:1px;height:14px;background:#dadee4"></div><div style="left:114px;top:113px;width:1px;height:14px;background:#dadee4"></div><div style="left:415px;top:113px;width:1px;height:14px;background:#dadee4"></div><div style="left:462px;top:113px;width:1px;height:14px;background:#dadee4"></div><div style="left:511px;top:113px;width:1px;height:14px;background:#dadee4"></div><div style="left:559px;top:113px;width:1px;height:14px;background:#dadee4"></div><div style="left:619px;top:113px;width:1px;height:14px;background:#dadee4"></div><div style="left:14px;top:118px;width:8px;height:3px;background:#7ab0e0;border:0.8px solid #3f6b9c;box-sizing:border-box;border-radius:1.2px"></div><span class="t" style="left:31.599999999999994px;top:115.85px;font-size:10.1px;color:#141414;transform:scaleX(0.8);transform-origin:0 0">00000...</span><span class="t" style="left:69px;top:115.85px;font-size:10.1px;color:#141414;transform:scaleX(0.8);transform-origin:0 0">772</span><span class="t" style="left:118.10000000000002px;top:115.85px;font-size:10.1px;color:#141414;transform:scaleX(0.8);transform-origin:0 0">Газовый котел Ariston CARES X 15 CF</span><span class="t" style="right:2px;top:115.85px;font-size:10.1px;color:#141414;transform:scaleX(0.8);transform-origin:100% 0">1 311,09</span><div style="left:0;top:127px;width:679px;height:14px;background:#fff"></div><div style="left:0;top:140px;width:679px;height:1px;background:#dadee4"></div><div style="left:28px;top:127px;width:1px;height:14px;background:#dadee4"></div><div style="left:65px;top:127px;width:1px;height:14px;background:#dadee4"></div><div style="left:114px;top:127px;width:1px;height:14px;background:#dadee4"></div><div style="left:415px;top:127px;width:1px;height:14px;background:#dadee4"></div><div style="left:462px;top:127px;width:1px;height:14px;background:#dadee4"></div><div style="left:511px;top:127px;width:1px;height:14px;background:#dadee4"></div><div style="left:559px;top:127px;width:1px;height:14px;background:#dadee4"></div><div style="left:619px;top:127px;width:1px;height:14px;background:#dadee4"></div><div style="left:14px;top:132px;width:8px;height:3px;background:#7ab0e0;border:0.8px solid #3f6b9c;box-sizing:border-box;border-radius:1.2px"></div><span class="t" style="left:31.599999999999994px;top:129.85px;font-size:10.1px;color:#141414;transform:scaleX(0.8);transform-origin:0 0">00000...</span><span class="t" style="left:69px;top:129.85px;font-size:10.1px;color:#141414;transform:scaleX(0.8);transform-origin:0 0">773</span><span class="t" style="left:118.10000000000002px;top:129.85px;font-size:10.1px;color:#141414;transform:scaleX(0.8);transform-origin:0 0">Газовый котел Ariston CARES X 15 FF</span><span class="t" style="right:219px;top:129.85px;font-size:10.1px;color:#141414;transform:scaleX(0.8);transform-origin:100% 0">1</span><span class="t" style="right:122px;top:129.85px;font-size:10.1px;color:#141414;transform:scaleX(0.8);transform-origin:100% 0">1</span><span class="t" style="right:62px;top:129.85px;font-size:10.1px;color:#141414;transform:scaleX(0.8);transform-origin:100% 0">1</span><span class="t" style="right:2px;top:129.85px;font-size:10.1px;color:#141414;transform:scaleX(0.8);transform-origin:100% 0">1 287,25</span><div style="left:0;top:141px;width:679px;height:14px;background:#fff"></div><div style="left:0;top:154px;width:679px;height:1px;background:#dadee4"></div><div style="left:28px;top:141px;width:1px;height:14px;background:#dadee4"></div><div style="left:65px;top:141px;width:1px;height:14px;background:#dadee4"></div><div style="left:114px;top:141px;width:1px;height:14px;background:#dadee4"></div><div style="left:415px;top:141px;width:1px;height:14px;background:#dadee4"></div><div style="left:462px;top:141px;width:1px;height:14px;background:#dadee4"></div><div style="left:511px;top:141px;width:1px;height:14px;background:#dadee4"></div><div style="left:559px;top:141px;width:1px;height:14px;background:#dadee4"></div><div style="left:619px;top:141px;width:1px;height:14px;background:#dadee4"></div><div style="left:14px;top:146px;width:8px;height:3px;background:#7ab0e0;border:0.8px solid #3f6b9c;box-sizing:border-box;border-radius:1.2px"></div><span class="t" style="left:31.599999999999994px;top:143.85px;font-size:10.1px;color:#141414;transform:scaleX(0.8);transform-origin:0 0">00000...</span><span class="t" style="left:69px;top:143.85px;font-size:10.1px;color:#141414;transform:scaleX(0.8);transform-origin:0 0">774</span><span class="t" style="left:118.10000000000002px;top:143.85px;font-size:10.1px;color:#141414;transform:scaleX(0.8);transform-origin:0 0">Газовый котел Ariston CARES X 18 FF</span><span class="t" style="right:2px;top:143.85px;font-size:10.1px;color:#141414;transform:scaleX(0.8);transform-origin:100% 0">1 334,93</span><div style="left:0;top:155px;width:679px;height:14px;background:#fff"></div><div style="left:0;top:168px;width:679px;height:1px;background:#dadee4"></div><div style="left:28px;top:155px;width:1px;height:14px;background:#dadee4"></div><div style="left:65px;top:155px;width:1px;height:14px;background:#dadee4"></div><div style="left:114px;top:155px;width:1px;height:14px;background:#dadee4"></div><div style="left:415px;top:155px;width:1px;height:14px;background:#dadee4"></div><div style="left:462px;top:155px;width:1px;height:14px;background:#dadee4"></div><div style="left:511px;top:155px;width:1px;height:14px;background:#dadee4"></div><div style="left:559px;top:155px;width:1px;height:14px;background:#dadee4"></div><div style="left:619px;top:155px;width:1px;height:14px;background:#dadee4"></div><div style="left:14px;top:160px;width:8px;height:3px;background:#7ab0e0;border:0.8px solid #3f6b9c;box-sizing:border-box;border-radius:1.2px"></div><span class="t" style="left:31.599999999999994px;top:157.85px;font-size:10.1px;color:#141414;transform:scaleX(0.8);transform-origin:0 0">00000...</span><span class="t" style="left:69px;top:157.85px;font-size:10.1px;color:#141414;transform:scaleX(0.8);transform-origin:0 0">775</span><span class="t" style="left:118.10000000000002px;top:157.85px;font-size:10.1px;color:#141414;transform:scaleX(0.8);transform-origin:0 0">Газовый котел Ariston CARES X 24 CF</span><span class="t" style="right:2px;top:157.85px;font-size:10.1px;color:#141414;transform:scaleX(0.8);transform-origin:100% 0">1 358,77</span><div style="left:0;top:169px;width:679px;height:14px;background:#fff"></div><div style="left:0;top:182px;width:679px;height:1px;background:#dadee4"></div><div style="left:28px;top:169px;width:1px;height:14px;background:#dadee4"></div><div style="left:65px;top:169px;width:1px;height:14px;background:#dadee4"></div><div style="left:114px;top:169px;width:1px;height:14px;background:#dadee4"></div><div style="left:415px;top:169px;width:1px;height:14px;background:#dadee4"></div><div style="left:462px;top:169px;width:1px;height:14px;background:#dadee4"></div><div style="left:511px;top:169px;width:1px;height:14px;background:#dadee4"></div><div style="left:559px;top:169px;width:1px;height:14px;background:#dadee4"></div><div style="left:619px;top:169px;width:1px;height:14px;background:#dadee4"></div><div style="left:14px;top:174px;width:8px;height:3px;background:#7ab0e0;border:0.8px solid #3f6b9c;box-sizing:border-box;border-radius:1.2px"></div><span class="t" style="left:31.599999999999994px;top:171.85px;font-size:10.1px;color:#141414;transform:scaleX(0.8);transform-origin:0 0">00000...</span><span class="t" style="left:69px;top:171.85px;font-size:10.1px;color:#141414;transform:scaleX(0.8);transform-origin:0 0">776</span><span class="t" style="left:118.10000000000002px;top:171.85px;font-size:10.1px;color:#141414;transform:scaleX(0.8);transform-origin:0 0">Газовый котел Ariston CARES X 24 FF</span><span class="t" style="right:2px;top:171.85px;font-size:10.1px;color:#141414;transform:scaleX(0.8);transform-origin:100% 0">1 394,52</span><div style="left:0;top:183px;width:679px;height:14px;background:#fff"></div><div style="left:0;top:196px;width:679px;height:1px;background:#dadee4"></div><div style="left:28px;top:183px;width:1px;height:14px;background:#dadee4"></div><div style="left:65px;top:183px;width:1px;height:14px;background:#dadee4"></div><div style="left:114px;top:183px;width:1px;height:14px;background:#dadee4"></div><div style="left:415px;top:183px;width:1px;height:14px;background:#dadee4"></div><div style="left:462px;top:183px;width:1px;height:14px;background:#dadee4"></div><div style="left:511px;top:183px;width:1px;height:14px;background:#dadee4"></div><div style="left:559px;top:183px;width:1px;height:14px;background:#dadee4"></div><div style="left:619px;top:183px;width:1px;height:14px;background:#dadee4"></div><div style="left:14px;top:188px;width:8px;height:3px;background:#7ab0e0;border:0.8px solid #3f6b9c;box-sizing:border-box;border-radius:1.2px"></div><span class="t" style="left:31.599999999999994px;top:185.85px;font-size:10.1px;color:#141414;transform:scaleX(0.8);transform-origin:0 0">00000...</span><span class="t" style="left:69px;top:185.85px;font-size:10.1px;color:#141414;transform:scaleX(0.8);transform-origin:0 0">777</span><span class="t" style="left:118.10000000000002px;top:185.85px;font-size:10.1px;color:#141414;transform:scaleX(0.8);transform-origin:0 0">Газовый котел Ariston CLAS X 24 CF</span><span class="t" style="right:2px;top:185.85px;font-size:10.1px;color:#141414;transform:scaleX(0.8);transform-origin:100% 0">1 522,9</span></div><div style="left:861px;top:61px;width:12px;height:205px;background:#f7f6ef;border-left:1px solid #d8d0b0;box-sizing:border-box"></div><div style="left:861px;top:61px;width:12px;height:15px;background:linear-gradient(#fcfbf4,#efeadb);border-left:1px solid #d8d0b0;border-bottom:1px solid #ddd6bb;box-sizing:border-box"></div><div style="left:861px;top:251px;width:12px;height:15px;background:linear-gradient(#fcfbf4,#efeadb);border-left:1px solid #d8d0b0;border-top:1px solid #ddd6bb;box-sizing:border-box"></div><svg style="position:absolute;left:864px;top:66px" width="6" height="5" viewBox="0 0 6 5"><path d="M0 4.6 L3 0 L6 4.6 Z" fill="#747474"/></svg><svg style="position:absolute;left:864px;top:256px" width="6" height="5" viewBox="0 0 6 5"><path d="M0 0.4 L3 5 L6 0.4 Z" fill="#747474"/></svg><div style="left:861px;top:158px;width:12px;height:12px;background:linear-gradient(#f4f0de,#e9e3c8);border:1px solid #ddd5b5;box-sizing:border-box"></div><svg style="position:absolute;left:864px;top:161px" width="6" height="6" viewBox="0 0 6 6"><circle cx="3" cy="3" r="1.8" fill="none" stroke="#b9b4a0" stroke-width="0.9"/></svg><div style="left:9px;top:273px;width:10px;height:10px;background:#fff;border:1px solid #c9c1a0;border-radius:2px;box-sizing:border-box"></div><svg style="position:absolute;left:10px;top:274px" width="8" height="8" viewBox="0 0 8 8"><path d="M1.6 4.2 L3.2 6.1 L6.6 2" fill="none" stroke="#151515" stroke-width="1.25"/></svg><span class="t" style="left:20.2px;top:273.88px;font-size:9px;font-weight:700;color:#1c1606;">При отсутствии подбирать товар под заказ</span><div style="left:9px;top:305px;width:865px;height:183px;border:1px solid #d5cdaa;box-sizing:border-box"></div><div style="left:9px;top:289px;width:60px;height:17px;background:#fbf9ec;border:1px solid #d5cdaa;border-bottom:none;border-radius:4px 4px 0 0;box-sizing:border-box;border-top:2px solid #f4d69c"></div><span class="t" style="left:39.0px;top:291.52px;font-size:11.2px;font-weight:700;color:#1a1406;transform:translateX(-50%)">Остатки</span><div style="left:74px;top:289px;width:62px;height:16px;background:#ece7d0;border:1px solid #ddd6b8;border-bottom:none;border-radius:4px 4px 0 0;box-sizing:border-box"></div><span class="t" style="left:105.0px;top:291.52px;font-size:11.2px;font-weight:700;color:#1a1406;transform:translateX(-50%)">Резервы</span><div style="left:141px;top:289px;width:61px;height:16px;background:#ece7d0;border:1px solid #ddd6b8;border-bottom:none;border-radius:4px 4px 0 0;box-sizing:border-box"></div><span class="t" style="left:171.5px;top:291.52px;font-size:11.2px;font-weight:700;color:#1a1406;transform:translateX(-50%)">Аналоги</span><div style="left:14px;top:310px;width:855px;height:97px;background:#fff;border:1px solid #d3cba9;box-sizing:border-box"></div><div style="left:15px;top:311px;width:853px;height:14px;background:linear-gradient(#fdfcf5,#ede6ca)"></div><div style="left:15px;top:311px;width:853px;height:1px;background:#fffef9"></div><div style="left:15px;top:324px;width:853px;height:1px;background:#e9dfb8"></div><div style="left:15px;top:325px;width:853px;height:1px;background:#d9cc9a"></div><div style="left:81px;top:312px;width:1px;height:13px;background:#e2d9b6"></div><div style="left:82px;top:312px;width:1px;height:13px;background:#fffdf5"></div><div style="left:296px;top:312px;width:1px;height:13px;background:#e2d9b6"></div><div style="left:297px;top:312px;width:1px;height:13px;background:#fffdf5"></div><div style="left:404px;top:312px;width:1px;height:13px;background:#e2d9b6"></div><div style="left:405px;top:312px;width:1px;height:13px;background:#fffdf5"></div><div style="left:534px;top:312px;width:1px;height:13px;background:#e2d9b6"></div><div style="left:535px;top:312px;width:1px;height:13px;background:#fffdf5"></div><div style="left:642px;top:312px;width:1px;height:13px;background:#e2d9b6"></div><div style="left:643px;top:312px;width:1px;height:13px;background:#fffdf5"></div><div style="left:750px;top:312px;width:1px;height:13px;background:#e2d9b6"></div><div style="left:751px;top:312px;width:1px;height:13px;background:#fffdf5"></div><span class="t" style="left:17.5px;top:313.73px;font-size:9.3px;font-weight:400;color:#4a3e1c;transform:scaleX(0.87);transform-origin:0 0;">№ п/п</span><span class="t" style="left:84.5px;top:313.73px;font-size:9.3px;font-weight:400;color:#4a3e1c;transform:scaleX(0.87);transform-origin:0 0;">Поставщик</span><span class="t" style="left:299.5px;top:313.73px;font-size:9.3px;font-weight:400;color:#4a3e1c;transform:scaleX(0.87);transform-origin:0 0;">Количество</span><span class="t" style="left:407.5px;top:313.73px;font-size:9.3px;font-weight:400;color:#4a3e1c;transform:scaleX(0.87);transform-origin:0 0;">Форма оплаты</span><span class="t" style="left:537.5px;top:313.73px;font-size:9.3px;font-weight:400;color:#4a3e1c;transform:scaleX(0.87);transform-origin:0 0;">Валюта</span><span class="t" style="left:645.5px;top:313.73px;font-size:9.3px;font-weight:400;color:#4a3e1c;transform:scaleX(0.87);transform-origin:0 0;">Заход</span><span class="t" style="left:753.5px;top:313.73px;font-size:9.3px;font-weight:400;color:#4a3e1c;transform:scaleX(0.87);transform-origin:0 0;">Отпускная цена, BYN</span><div style="left:15px;top:340px;width:853px;height:1px;background:#dadee4"></div><div style="left:81px;top:326px;width:1px;height:14px;background:#dadee4"></div><div style="left:296px;top:326px;width:1px;height:14px;background:#dadee4"></div><div style="left:404px;top:326px;width:1px;height:14px;background:#dadee4"></div><div style="left:534px;top:326px;width:1px;height:14px;background:#dadee4"></div><div style="left:642px;top:326px;width:1px;height:14px;background:#dadee4"></div><div style="left:750px;top:326px;width:1px;height:14px;background:#dadee4"></div><span class="t" style="left:17.5px;top:328.25px;font-size:10.1px;font-weight:400;color:#161616;transform:scaleX(0.8);transform-origin:0 0;">1</span><span class="t" style="left:84.5px;top:328.25px;font-size:10.1px;font-weight:400;color:#161616;transform:scaleX(0.8);transform-origin:0 0;">ИнвестПлюсТермо</span><span class="t" style="right:486px;top:328.25px;font-size:10.1px;font-weight:400;color:#161616;transform:scaleX(0.8);transform-origin:100% 0;">1</span><span class="t" style="left:407.5px;top:328.25px;font-size:10.1px;font-weight:400;color:#161616;transform:scaleX(0.8);transform-origin:0 0;">Оплата безналичными</span><span class="t" style="left:537.5px;top:328.25px;font-size:10.1px;font-weight:400;color:#161616;transform:scaleX(0.8);transform-origin:0 0;">BYN</span><span class="t" style="right:139px;top:328.25px;font-size:10.1px;font-weight:400;color:#161616;transform:scaleX(0.8);transform-origin:100% 0;">1 800,00</span><span class="t" style="right:21.5px;top:328.25px;font-size:10.1px;font-weight:400;color:#161616;transform:scaleX(0.8);transform-origin:100% 0;">2 095,36</span><span class="t" style="left:14.2px;top:410.77px;font-size:10.9px;font-weight:700;color:#1c1606;">Остатки по другим складам:</span><div style="left:14px;top:423px;width:855px;height:63px;background:#fff;border:1px solid #d3cba9;box-sizing:border-box"></div><div style="left:15px;top:424px;width:853px;height:14px;background:linear-gradient(#fdfcf5,#ede6ca)"></div><div style="left:15px;top:424px;width:853px;height:1px;background:#fffef9"></div><div style="left:15px;top:437px;width:853px;height:1px;background:#e9dfb8"></div><div style="left:15px;top:438px;width:853px;height:1px;background:#d9cc9a"></div><div style="left:73px;top:425px;width:1px;height:13px;background:#e2d9b6"></div><div style="left:74px;top:425px;width:1px;height:13px;background:#fffdf5"></div><div style="left:169px;top:425px;width:1px;height:13px;background:#e2d9b6"></div><div style="left:170px;top:425px;width:1px;height:13px;background:#fffdf5"></div><div style="left:360px;top:425px;width:1px;height:13px;background:#e2d9b6"></div><div style="left:361px;top:425px;width:1px;height:13px;background:#fffdf5"></div><div style="left:455px;top:425px;width:1px;height:13px;background:#e2d9b6"></div><div style="left:456px;top:425px;width:1px;height:13px;background:#fffdf5"></div><div style="left:570px;top:425px;width:1px;height:13px;background:#e2d9b6"></div><div style="left:571px;top:425px;width:1px;height:13px;background:#fffdf5"></div><div style="left:666px;top:425px;width:1px;height:13px;background:#e2d9b6"></div><div style="left:667px;top:425px;width:1px;height:13px;background:#fffdf5"></div><div style="left:762px;top:425px;width:1px;height:13px;background:#e2d9b6"></div><div style="left:763px;top:425px;width:1px;height:13px;background:#fffdf5"></div><span class="t" style="left:17.5px;top:426.73px;font-size:9.3px;font-weight:400;color:#4a3e1c;transform:scaleX(0.87);transform-origin:0 0;">№ п/п</span><span class="t" style="left:76.5px;top:426.73px;font-size:9.3px;font-weight:400;color:#4a3e1c;transform:scaleX(0.87);transform-origin:0 0;">Склад</span><span class="t" style="left:172.5px;top:426.73px;font-size:9.3px;font-weight:400;color:#4a3e1c;transform:scaleX(0.87);transform-origin:0 0;">Поставщик</span><span class="t" style="left:363.5px;top:426.73px;font-size:9.3px;font-weight:400;color:#4a3e1c;transform:scaleX(0.87);transform-origin:0 0;">Количество</span><span class="t" style="left:458.5px;top:426.73px;font-size:9.3px;font-weight:400;color:#4a3e1c;transform:scaleX(0.87);transform-origin:0 0;">Форма оплаты</span><span class="t" style="left:573.5px;top:426.73px;font-size:9.3px;font-weight:400;color:#4a3e1c;transform:scaleX(0.87);transform-origin:0 0;">Валюта</span><span class="t" style="left:669.5px;top:426.73px;font-size:9.3px;font-weight:400;color:#4a3e1c;transform:scaleX(0.87);transform-origin:0 0;">Заход</span><span class="t" style="left:765.5px;top:426.73px;font-size:9.3px;font-weight:400;color:#4a3e1c;transform:scaleX(0.87);transform-origin:0 0;">Отпускная цена</span>
</body></html>
